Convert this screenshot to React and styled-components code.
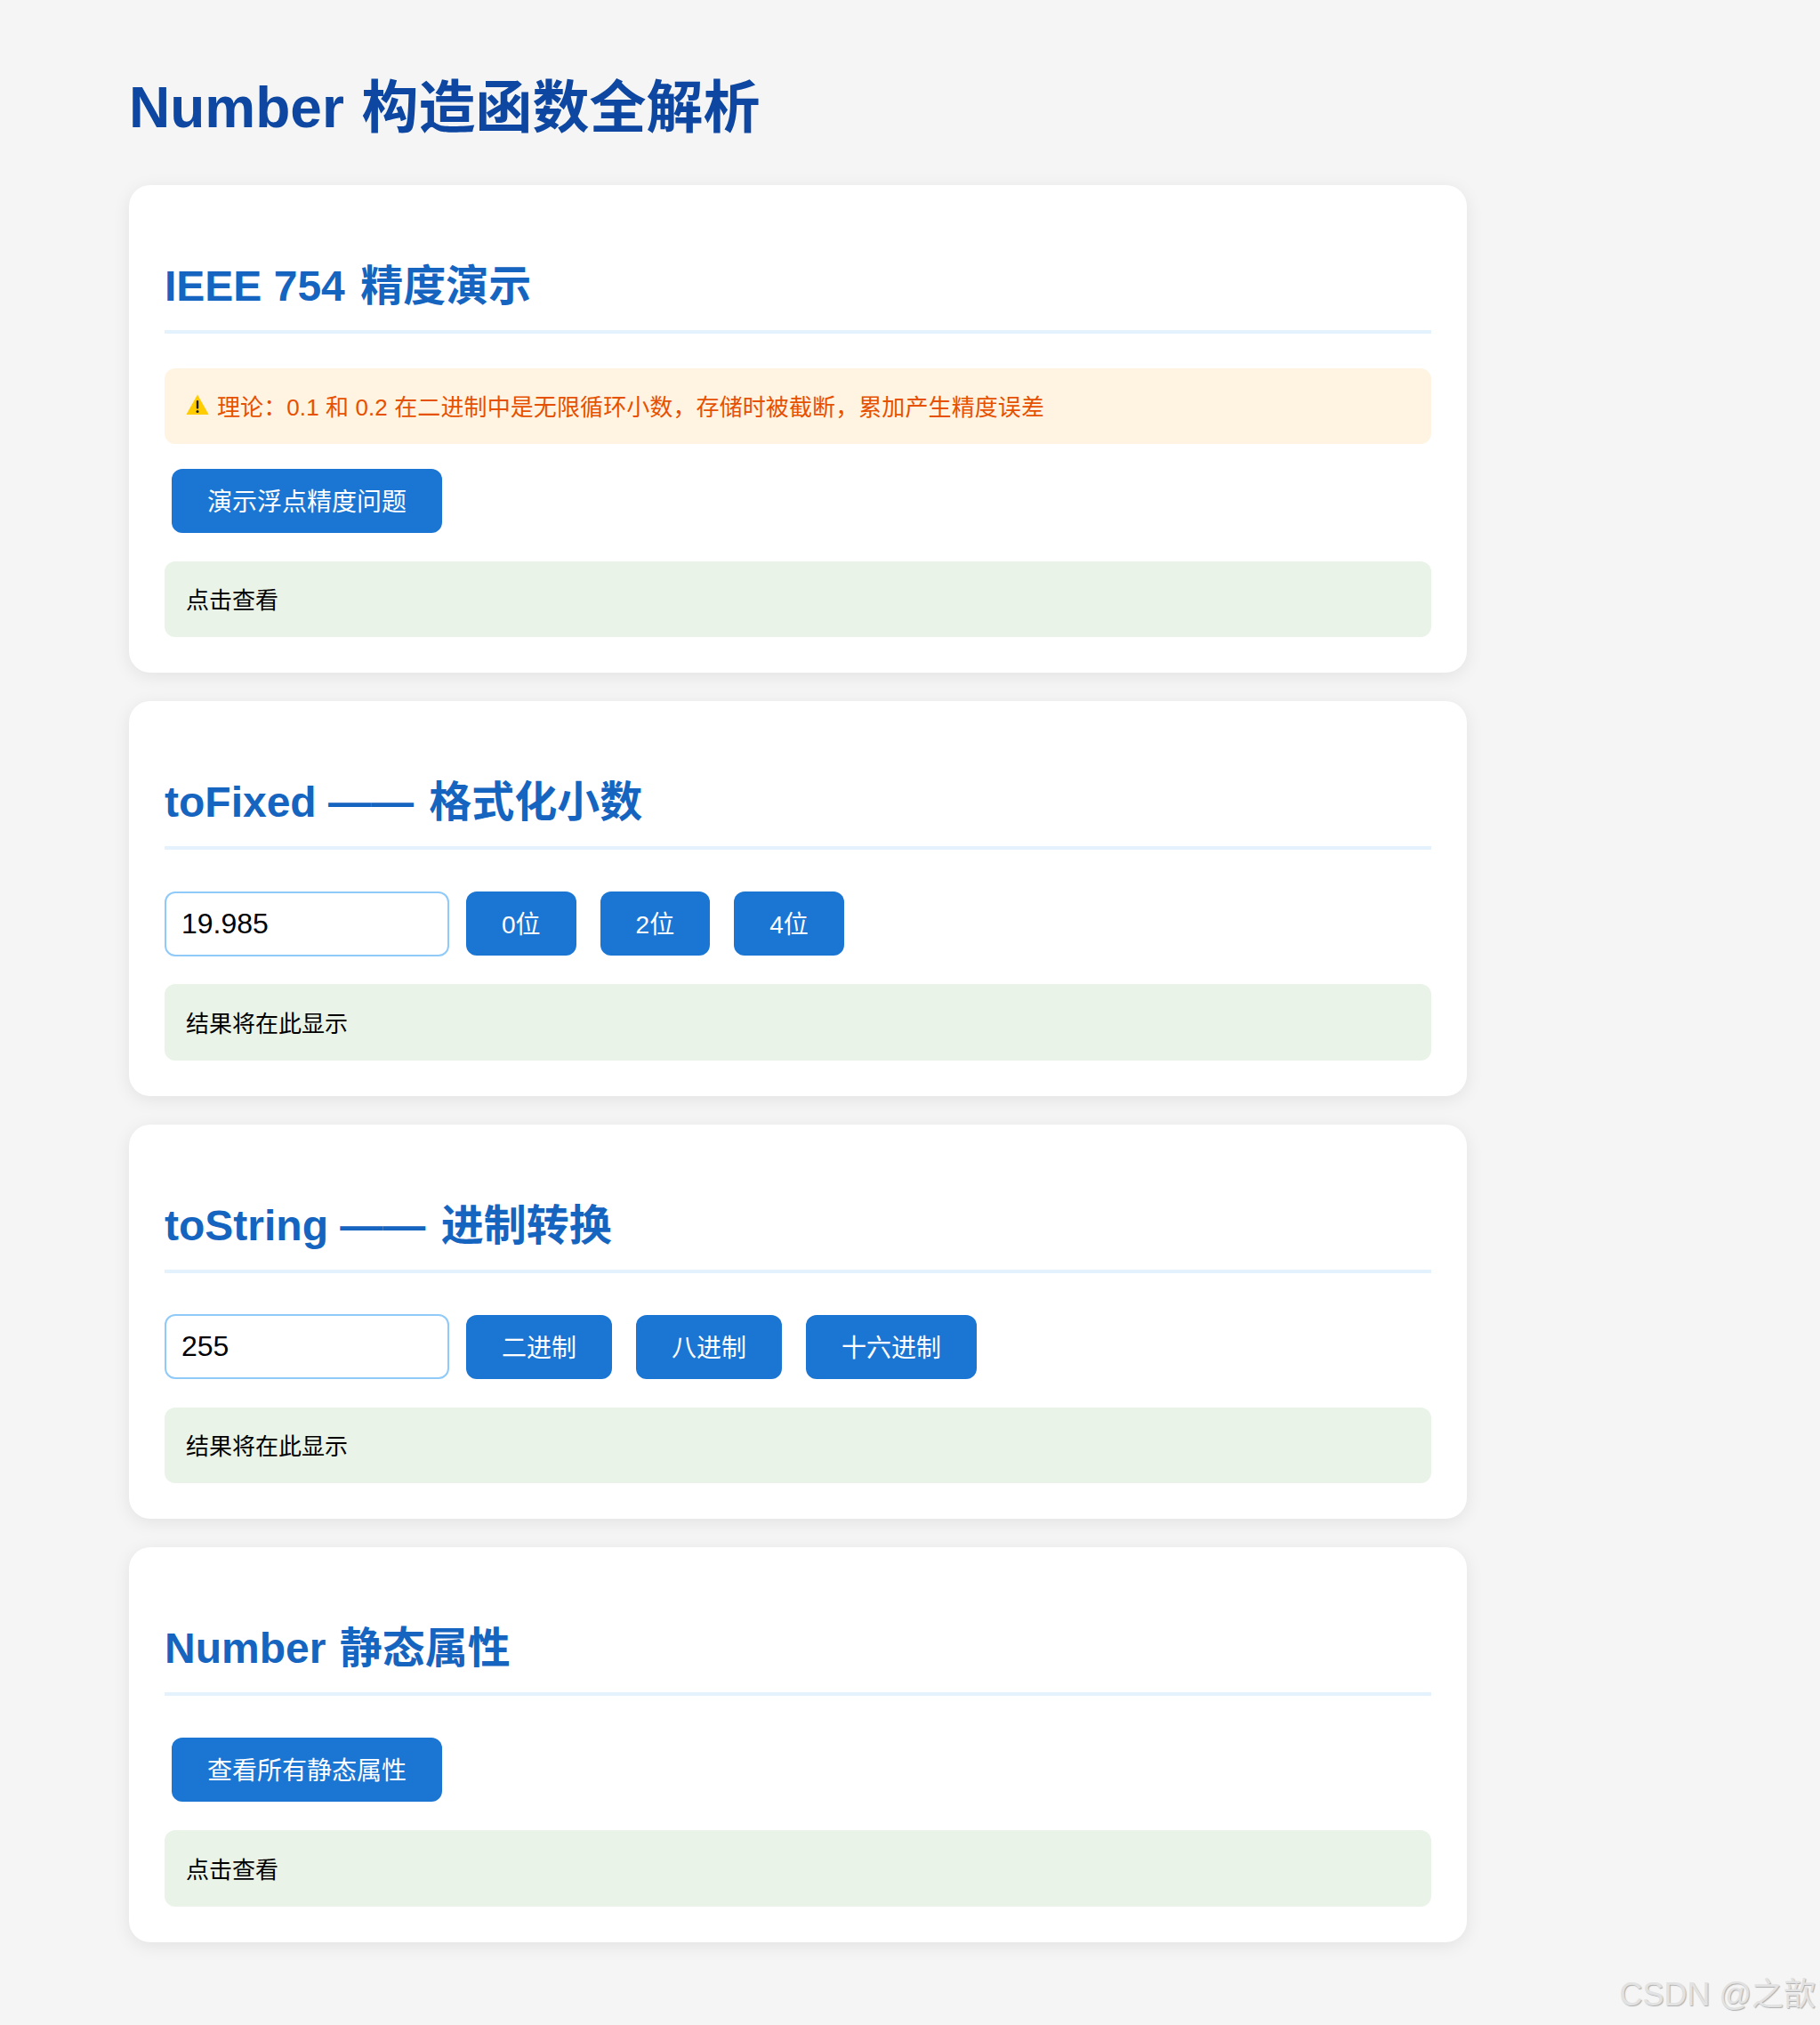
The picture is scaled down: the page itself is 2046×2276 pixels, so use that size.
import styled, { createGlobalStyle } from 'styled-components';

const GlobalStyle = createGlobalStyle`
  html, body {
    margin: 0;
    padding: 0;
    background-color: #f5f5f5;
  }
  body {
    font-family: "Liberation Sans", "Noto Sans CJK SC", sans-serif;
  }
`;

const Page = styled.div`
  position: relative;
  box-sizing: border-box;
  height: 2276px;
  padding: 84px 397px 0 145px;
`;

const Title = styled.h1`
  margin: 0 0 49.7px;
  font-size: 64px;
  line-height: 74px;
  font-weight: 700;
  color: #0d47a1;
`;

const Card = styled.section`
  background-color: #fff;
  border-radius: 24px;
  padding: 40px;
  margin-bottom: 32px;
  box-shadow: 0 4px 20px rgba(0, 0, 0, 0.08);
`;

const Heading = styled.h2`
  margin: 46px 0 39px;
  padding-bottom: 21px;
  font-size: 48px;
  line-height: 56px;
  font-weight: 700;
  color: #1565c0;
  border-bottom: 4px solid #e3f2fd;
`;

const Cjk = styled.span`
  margin-left: ${(p) => p.$gap}px;
`;

const Notice = styled.div`
  display: flex;
  align-items: center;
  box-sizing: border-box;
  height: 85px;
  padding: 0 24px 2px;
  margin-bottom: 20px;
  font-size: 26px;
  letter-spacing: 0.1px;
  color: #e65100;
  background-color: #fff3e1;
  border-radius: 12px;
`;

const WarningIcon = styled.svg`
  width: 26px;
  height: 24px;
  margin-right: 9px;
  flex-shrink: 0;
`;

const Actions = styled.div`
  display: flex;
  align-items: center;
  gap: 27px;
  padding: 8px 0 0 ${(p) => (p.$inset ? '8px' : '0')};
  margin-bottom: 32px;
`;

const NumberInput = styled.input`
  box-sizing: border-box;
  width: 320px;
  height: 73px;
  margin: -1px -8px -1px 0;
  padding: 0 17px;
  font-family: inherit;
  font-size: 32px;
  color: #000;
  background-color: #fff;
  border: 2px solid #90caf9;
  border-radius: 12px;
  outline: none;
`;

const Button = styled.button`
  height: 72px;
  padding: 0 40px 2px;
  font-family: inherit;
  font-size: 28px;
  color: #fff;
  background-color: #1b76d3;
  border: none;
  border-radius: 12px;
  cursor: pointer;
`;

const Result = styled.div`
  display: flex;
  align-items: center;
  box-sizing: border-box;
  height: 85.6px;
  padding: 0 24px 2px;
  font-size: 26px;
  color: #000;
  background-color: #e9f3e8;
  border-radius: 12px;
`;

const Watermark = styled.div`
  position: absolute;
  right: 5px;
  bottom: 12px;
  font-size: 36px;
  line-height: 44px;
  color: #e2e2e2;
  text-shadow: 1px 1px 1px #aeaeae;
`;

function App() {
  return (
    <Page>
      <GlobalStyle />
      <Title>
        Number <Cjk $gap={2}>构造函数全解析</Cjk>
      </Title>

      <Card>
        <Heading>
          IEEE 754 <Cjk $gap={4}>精度演示</Cjk>
        </Heading>
        <Notice>
          <WarningIcon viewBox="0 0 26 24">
            <path d="M13 0.5 L25.6 23 H0.4 Z" fill="#ffcc00" />
            <rect x="11.8" y="7" width="2.4" height="9.5" rx="1" fill="#1a1a1a" />
            <circle cx="13" cy="19.5" r="1.5" fill="#1a1a1a" />
          </WarningIcon>
          理论：0.1 和 0.2 在二进制中是无限循环小数，存储时被截断，累加产生精度误差
        </Notice>
        <Actions $inset>
          <Button>演示浮点精度问题</Button>
        </Actions>
        <Result>点击查看</Result>
      </Card>

      <Card>
        <Heading>
          toFixed —— <Cjk $gap={4}>格式化小数</Cjk>
        </Heading>
        <Actions>
          <NumberInput defaultValue="19.985" />
          <Button>0位</Button>
          <Button>2位</Button>
          <Button>4位</Button>
        </Actions>
        <Result>结果将在此显示</Result>
      </Card>

      <Card>
        <Heading>
          toString —— <Cjk $gap={4}>进制转换</Cjk>
        </Heading>
        <Actions>
          <NumberInput defaultValue="255" />
          <Button>二进制</Button>
          <Button>八进制</Button>
          <Button>十六进制</Button>
        </Actions>
        <Result>结果将在此显示</Result>
      </Card>

      <Card>
        <Heading>
          Number <Cjk $gap={2}>静态属性</Cjk>
        </Heading>
        <Actions $inset>
          <Button>查看所有静态属性</Button>
        </Actions>
        <Result>点击查看</Result>
      </Card>

      <Watermark>CSDN @之歆</Watermark>
    </Page>
  );
}

export default App;
